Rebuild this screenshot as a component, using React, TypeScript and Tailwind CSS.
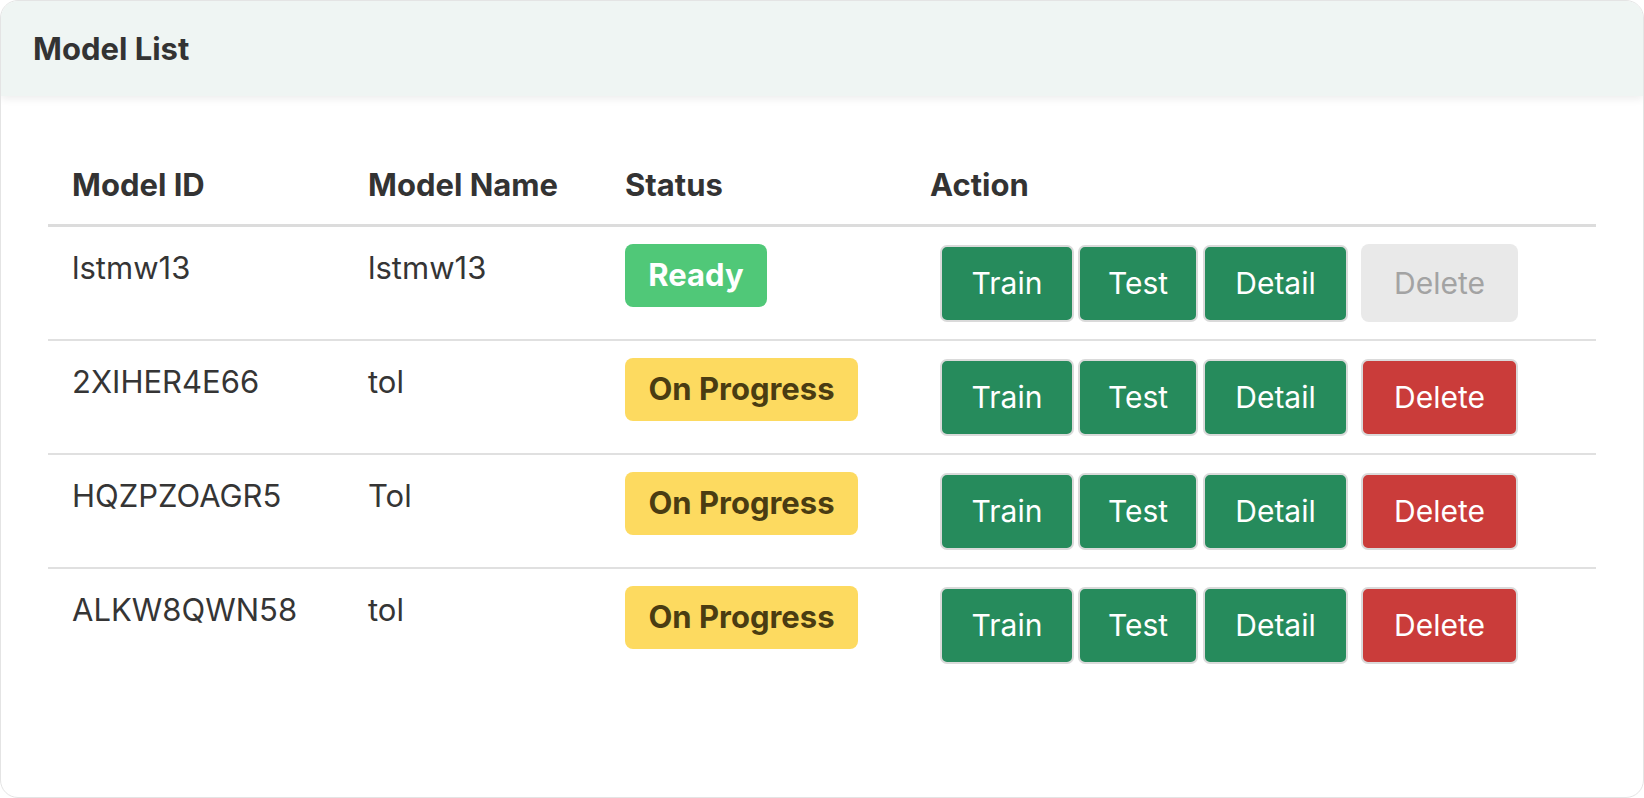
import React from "react";

type Row = { id: string; name: string; status: "Ready" | "On Progress" };

const rows: Row[] = [
  { id: "lstmw13", name: "lstmw13", status: "Ready" },
  { id: "2XIHER4E66", name: "tol", status: "On Progress" },
  { id: "HQZPZOAGR5", name: "Tol", status: "On Progress" },
  { id: "ALKW8QWN58", name: "tol", status: "On Progress" },
];

function Badge({ status }: { status: Row["status"] }) {
  if (status === "Ready") {
    return (
      <div className="w-[142px] h-[63px] rounded-[8px] bg-[#50c878] text-white font-bold text-[31px] flex items-center justify-center">
        Ready
      </div>
    );
  }
  return (
    <div className="w-[233px] h-[63px] rounded-[8px] bg-[#fdda60] text-[#4a3c12] font-bold text-[31px] flex items-center justify-center">
      On Progress
    </div>
  );
}

function Actions({ ready }: { ready: boolean }) {
  const g =
    "h-[77px] rounded-[7px] border-2 border-[#dadada] bg-[#268b5c] text-white text-[30px] flex items-center justify-center";
  return (
    <div className="flex items-start pt-[18px]">
      <div className={`${g} w-[134px]`}>Train</div>
      <div className={`${g} w-[120px] ml-[4px]`}>Test</div>
      <div className={`${g} w-[145px] ml-[5px]`}>Detail</div>
      {ready ? (
        <div className="ml-[13px] w-[157px] h-[78px] rounded-[8px] bg-[#e9e9e9] text-[#a3a3a3] text-[30px] flex items-center justify-center -mt-[1px]">
          Delete
        </div>
      ) : (
        <div className="ml-[13px] w-[157px] h-[77px] rounded-[7px] border-2 border-[#dadada] bg-[#ca3c3a] text-white text-[30px] flex items-center justify-center">
          Delete
        </div>
      )}
    </div>
  );
}

export default function App() {
  return (
    <div className="w-[1644px] h-[798px] bg-white font-['Inter',sans-serif] text-[#353535]">
      <div className="h-full rounded-[18px] border border-[#e4e4e4] overflow-hidden flex flex-col bg-white">
        <div className="relative z-10 h-[95px] shrink-0 bg-[#eff5f3] shadow-[0_3px_8px_rgba(0,0,0,0.07)] flex items-center pl-[32px]">
          <h2 className="text-[31px] font-bold text-[#333333] leading-none">Model List</h2>
        </div>
        <div className="px-[47px] pt-[47px]">
          <div className="grid grid-cols-[296px_257px_305px_1fr] border-b-[3px] border-[#dcdcdc]">
            {["Model ID", "Model Name", "Status", "Action"].map((h) => (
              <div key={h} className="pl-[24px] pt-[22px] pb-[19px] text-[31px] leading-[40px] font-bold text-[#333333]">
                {h}
              </div>
            ))}
          </div>
          {rows.map((r, i) => (
            <div
              key={r.id}
              className={`grid grid-cols-[296px_257px_305px_1fr] h-[114px] ${
                i < rows.length - 1 ? "border-b-2 border-[#e0e0e0]" : ""
              }`}
            >
              <div className="pl-[24px] pt-[21px] text-[31px] leading-[40px]">{r.id}</div>
              <div className="pl-[24px] pt-[21px] text-[31px] leading-[40px]">{r.name}</div>
              <div className="pl-[24px] pt-[17px]">
                <Badge status={r.status} />
              </div>
              <div className="pl-[34px]">
                <Actions ready={r.status === "Ready"} />
              </div>
            </div>
          ))}
        </div>
      </div>
    </div>
  );
}
